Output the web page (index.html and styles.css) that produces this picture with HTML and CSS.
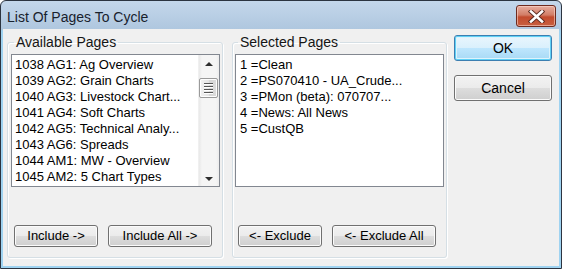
FILE: index.html
```html
<!DOCTYPE html>
<html>
<head>
<meta charset="utf-8">
<link rel="stylesheet" href="styles.css">
</head>
<body>
<div class="window">
  <div class="titlebar">
    <span class="title">List Of Pages To Cycle</span>
    <div class="close">
      <svg width="17" height="13" viewBox="0 0 17 13">
        <path d="M3 1.5 L14 11.5 M14 1.5 L3 11.5" stroke="#5a2a20" stroke-width="4.4" stroke-linecap="square"/>
        <path d="M3 1.5 L14 11.5 M14 1.5 L3 11.5" stroke="#ffffff" stroke-width="2.6" stroke-linecap="square"/>
      </svg>
    </div>
  </div>
  <div class="client">
    <fieldset class="group group-avail">
      <legend>Available Pages</legend>
      <div class="listbox">
        <div class="items">
          <div class="item">1038 AG1: Ag Overview</div>
          <div class="item">1039 AG2: Grain Charts</div>
          <div class="item">1040 AG3: Livestock Chart...</div>
          <div class="item">1041 AG4: Soft Charts</div>
          <div class="item">1042 AG5: Technical Analy...</div>
          <div class="item">1043 AG6: Spreads</div>
          <div class="item">1044 AM1: MW - Overview</div>
          <div class="item">1045 AM2: 5 Chart Types</div>
        </div>
        <div class="scrollbar">
          <div class="arrow up"></div>
          <div class="track">
            <div class="thumb"><span></span><span></span><span></span><span></span></div>
          </div>
          <div class="arrow down"></div>
        </div>
      </div>
      <div class="btnrow">
        <button class="btn small">Include -&gt;</button>
        <button class="btn wide">Include All -&gt;</button>
      </div>
    </fieldset>
    <fieldset class="group group-sel">
      <legend>Selected Pages</legend>
      <div class="listbox">
        <div class="items sel">
          <div class="item">1 =Clean</div>
          <div class="item">2 =PS070410 - UA_Crude...</div>
          <div class="item">3 =PMon (beta): 070707...</div>
          <div class="item">4 =News: All News</div>
          <div class="item">5 =CustQB</div>
        </div>
      </div>
      <div class="btnrow">
        <button class="btn small">&lt;- Exclude</button>
        <button class="btn wide">&lt;- Exclude All</button>
      </div>
    </fieldset>
    <div class="side">
      <button class="btn default">OK</button>
      <button class="btn">Cancel</button>
    </div>
  </div>
</div>
</body>
</html>
```

FILE: styles.css
```css
* { box-sizing: border-box; }
html, body { margin: 0; padding: 0; }
body {
  width: 562px;
  height: 269px;
  font-family: "Liberation Sans", Arial, sans-serif;
  background: #ffffff;
  overflow: hidden;
}
.window {
  width: 562px;
  height: 269px;
  border: 1px solid #2c3440;
  border-radius: 6px 6px 0 0;
  background: linear-gradient(#c4d7eb, #afc7df 28px, #9fd3f1 30px);
  display: flex;
  flex-direction: column;
}
.titlebar {
  height: 28px;
  display: flex;
  align-items: flex-start;
  justify-content: space-between;
  padding: 0 5px 0 6px;
  flex: none;
}
.title {
  font-size: 14px;
  color: #18222e;
  line-height: 16px;
  margin-top: 8px;
}
.close {
  width: 40px;
  height: 22px;
  margin-top: 4px;
  border: 1px solid #6e2a1e;
  border-radius: 3px;
  background: linear-gradient(#e6ad9f, #d27d66 45%, #c24b2e 55%, #c95f3f);
  box-shadow: inset 0 0 0 1px rgba(255, 220, 210, 0.55);
  display: flex;
  align-items: center;
  justify-content: center;
}
.close svg { display: block; }
.client {
  flex: 1;
  margin: 0 2px 2px 2px;
  background: #f0f0f0;
  display: flex;
  align-items: flex-start;
  padding: 5px 0 0 4px;
}
.group {
  margin: 0;
  border: 1px solid #d5dfe5;
  border-radius: 3px;
  box-shadow: inset 1px 1px 0 #fff, 1px 1px 0 #fff;
  padding: 4px 2px 10px 2px;
  min-width: 0;
  flex: none;
}
.group legend {
  font-size: 14px;
  line-height: 16px;
  color: #151515;
  padding: 0 2px;
  margin-left: 3px;
}
.group-avail {
  width: 216px;
  padding-left: 3px;
}
.group-sel {
  width: 215px;
  margin-left: 9px;
}
.listbox {
  width: 209px;
  height: 133px;
  border: 1px solid #828790;
  background: #ffffff;
  display: flex;
}
.items {
  flex: 1;
  padding: 2px 0 0 3px;
  font-size: 13px;
  line-height: 16px;
  color: #000;
  white-space: nowrap;
  overflow: hidden;
}
.items.sel { padding-left: 4px; }
.scrollbar {
  width: 21px;
  display: flex;
  flex-direction: column;
  background: linear-gradient(90deg, #e8e8e8, #f5f5f5 15%, #f5f5f5 85%, #ececec);
  border-left: 1px solid #f0f0f0;
}
.arrow {
  height: 17px;
  position: relative;
  flex: none;
}
.arrow::after {
  content: "";
  position: absolute;
  left: 50%;
  top: 50%;
  margin-left: -4px;
  border-left: 4px solid transparent;
  border-right: 4px solid transparent;
}
.arrow.up::after {
  margin-top: -2px;
  border-bottom: 4px solid #2e2e2e;
}
.arrow.down::after {
  margin-top: -1px;
  border-top: 4px solid #2e2e2e;
}
.track {
  flex: 1;
  padding-top: 6px;
}
.thumb {
  width: 19px;
  height: 20px;
  margin-left: 0;
  border: 1px solid #9a9a9a;
  border-radius: 2px;
  background: linear-gradient(90deg, #f2f2f2, #e4e4e4 50%, #d6d6d6 51%, #dcdcdc);
  box-shadow: inset 0 0 0 1px #fdfdfd;
  display: flex;
  flex-direction: column;
  align-items: center;
  justify-content: center;
  gap: 2px;
}
.thumb span {
  width: 9px;
  height: 1px;
  background: #555;
  box-shadow: 0 1px 0 #fff;
}
.btnrow {
  display: flex;
  gap: 10px;
  margin-top: 38px;
  padding-left: 3px;
}
.btn {
  font-family: "Liberation Sans", Arial, sans-serif;
  font-size: 13px;
  color: #000;
  height: 22px;
  padding: 0;
  border: 1px solid #707070;
  border-radius: 3px;
  background: linear-gradient(#f2f2f2, #ebebeb 50%, #dddddd 51%, #cfcfcf);
  box-shadow: inset 0 0 0 1px #fbfbfb;
  line-height: 18px;
  text-align: center;
}
.btn.small { width: 84px; }
.btn.wide { width: 104px; }
.side {
  margin-left: 7px;
  padding-top: 1px;
  display: flex;
  flex-direction: column;
  gap: 14px;
}
.side .btn {
  width: 98px;
  height: 26px;
  font-size: 14px;
}
.btn.default {
  border-color: #3c7fb1;
  background: linear-gradient(#eaf6fd, #d9f0fc 50%, #bee6fd 51%, #a7d9f5);
  box-shadow: inset 0 0 0 1px #5fd0f5, inset 0 0 0 2px #ddf3fc;
}
```
